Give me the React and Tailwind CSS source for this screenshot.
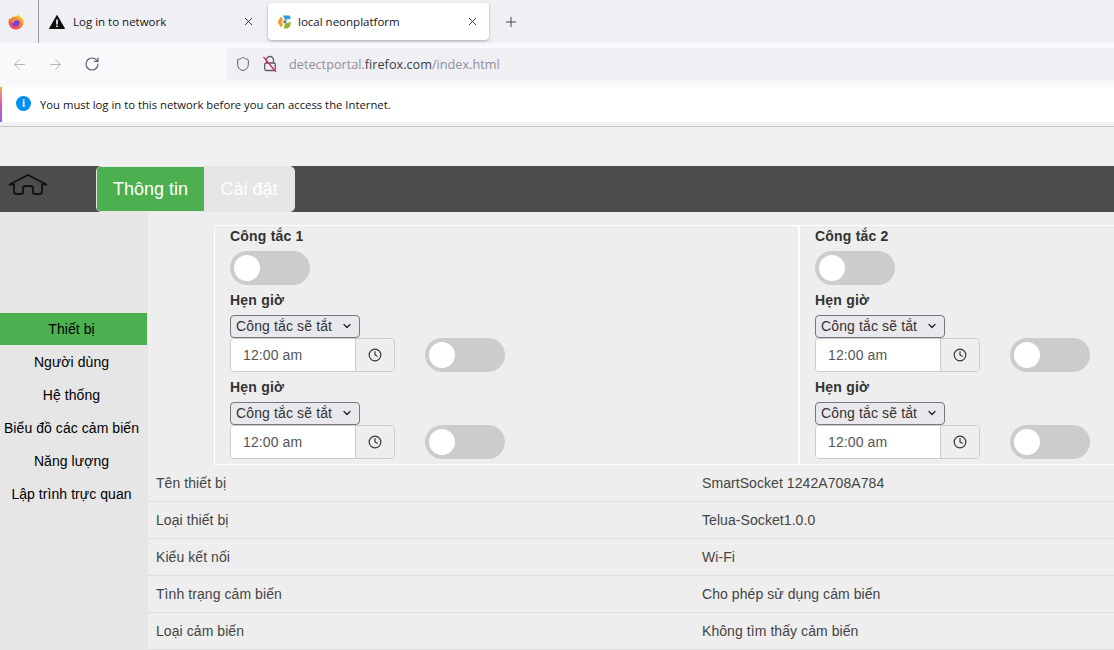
import React from "react";
import { ArrowLeft, ArrowRight, RotateCw, Plus, X, Shield, Clock, ChevronDown } from "lucide-react";

const menuItems = ["Thiết bị", "Người dùng", "Hệ thống", "Biểu đồ các cảm biến", "Năng lượng", "Lập trình trực quan"];

const infoRows = [
  ["Tên thiết bị", "SmartSocket 1242A708A784"],
  ["Loại thiết bị", "Telua-Socket1.0.0"],
  ["Kiểu kết nối", "Wi-Fi"],
  ["Tình trạng cảm biến", "Cho phép sử dụng cảm biến"],
  ["Loại cảm biến", "Không tìm thấy cảm biến"],
];

const FirefoxLogo = () => (
  <svg width="16" height="16" viewBox="0 0 16 16">
    <defs>
      <linearGradient id="ffBody" x1="0.8" y1="0.1" x2="0.2" y2="1">
        <stop offset="0" stopColor="#ffd43a" />
        <stop offset="0.45" stopColor="#ff7a2e" />
        <stop offset="1" stopColor="#f0307a" />
      </linearGradient>
    </defs>
    <path d="M10.500.3c.2 1.200 1 1.800 2 2.500 1.800 1.300 3 3 3 5.200A7.500 7.500 0 0 1 .5 8c0-1.500.4-2.900 1.200-4 0 .8.200 1.300.6 1.600C3 3.800 4.500 2.600 6.500 2.500 8 2.400 9.800 1.800 10.500.3z" fill="url(#ffBody)" />
    <circle cx="7.700" cy="8.500" r="3.900" fill="#7b3fd6" />
    <path d="M3.600 7.500C4.400 5.200 6.500 4.200 8.500 4.500c1.800.3 3 1.500 3.300 3-1-1.200-2.500-1.500-3.800-1.200-1.500.3-2.500 1.300-2.400 3C4.400 9 3.800 8.300 3.600 7.500z" fill="#ff9a2e" />
  </svg>
);

const PortalLogo = () => (
  <svg width="14" height="14" viewBox="0 0 14 14">
    <path d="M4 1.500 .5 7 4 12.500 6 9.500 4.500 7 6 4.500z" fill="#f59a23" />
    <path d="M6 .5h6.500L14 3.500 8 5z" fill="#2f9bd8" />
    <path d="M8 8.500 14 7l-1 4.500-2.500 2H6.500z" fill="#8cb83a" />
    <path d="M5.500 7 7 5.300h2.500V8.300H7z" fill="#7c8288" />
  </svg>
);

const WarningIcon = () => (
  <svg width="16" height="14" viewBox="0 0 16 14">
    <path d="M8 .5 15.500 13.500H.5z" fill="#0c0c0d" stroke="#0c0c0d" strokeLinejoin="round" />
    <rect x="7.200" y="4.500" width="1.600" height="5" fill="#fff" />
    <rect x="7.200" y="10.500" width="1.600" height="1.600" fill="#fff" />
  </svg>
);

const InsecureLock = () => (
  <svg width="16" height="18" viewBox="0 0 16 18" fill="none" className="block">
    <path d="M4.500 8V5a3.500 3.500 0 0 1 7 0v3" stroke="#5b5b66" strokeWidth="1.300" />
    <rect x="2.700" y="8" width="10.600" height="7.500" rx="1.500" stroke="#5b5b66" strokeWidth="1.300" />
    <path d="M1.500 2 14 17" stroke="#e22850" strokeWidth="1.300" />
  </svg>
);

const HomeIcon = () => (
  <svg width="40" height="24" viewBox="0 0 40 24" fill="none" stroke="#111" strokeWidth="1.800" strokeLinejoin="round">
    <path d="M6 11.500H1.500L20 2L38.500 11.500H34V18.500Q34 21 31.500 21H27Q25 21 25 19V15.500Q25 13 22.500 13H17.500Q15 13 15 15.500V19Q15 21 13 21H8.500Q6 21 6 18.500Z" />
  </svg>
);

const Toggle = () => (
  <div className="flex h-[34px] w-[80px] items-center rounded-full bg-[#cccccc] pl-1">
    <div className="h-[26px] w-[26px] rounded-full bg-white" />
  </div>
);

const Timer = () => (
  <div>
    <div className="flex h-[30px] items-center text-sm font-bold tracking-[0.2px] text-[#333333]">Hẹn giờ</div>
    <div className="flex h-[23px] w-[130px] items-center justify-between rounded-[4px] border border-[#767680] bg-[#e9e9ed] pb-[1px] pl-[5px] pr-[6px] text-sm tracking-[0.13px] text-[#333333]">
      <span>Công tắc sẽ tắt</span>
      <ChevronDown size={12} strokeWidth={2.500} className="text-[#222222]" />
    </div>
    <div className="flex items-center">
      <div className="flex h-[34px] w-[165px] overflow-hidden rounded-[4px] border border-[#cccccc]">
        <input
          readOnly
          value="12:00 am"
          className="h-full w-[124px] bg-white pl-[12px] font-['Liberation_Sans',sans-serif] text-sm tracking-[0.1px] text-[#555555] outline-none"
        />
        <div className="flex flex-1 items-center justify-center border-l border-[#cccccc] bg-[#eeeeee]">
          <Clock size={14} strokeWidth={2} className="text-[#333333]" />
        </div>
      </div>
      <div className="ml-[30px]">
        <Toggle />
      </div>
    </div>
  </div>
);

const SwitchPanel = ({ title, className }) => (
  <div className={`h-[240px] border border-white pl-[15px] ${className}`}>
    <div className="h-[25px] text-sm font-bold leading-[20px] tracking-[0.2px] text-[#333333]">{title}</div>
    <Toggle />
    <Timer />
    <Timer />
  </div>
);

export default function App() {
  return (
    <div className="h-[650px] w-[1114px] overflow-hidden bg-[#eeeeee] font-['Liberation_Sans',sans-serif]">
      {/* Browser tabs */}
      <div className="flex h-[43px] bg-[#f0f0f4] font-['Open_Sans',sans-serif] text-[11.5px] text-[#15141a]">
        <div className="flex w-[39px] items-center border-r border-[#9a9a9a] pl-[8px]">
          <FirefoxLogo />
        </div>
        <div className="flex w-[220px] items-center pl-[10px] pr-[3px]">
          <WarningIcon />
          <span className="ml-[8px] flex-1">Log in to network</span>
          <X size={13} strokeWidth={1.500} className="mr-[1px]" />
        </div>
        <div className="mt-[3px] ml-[9px] flex h-[37px] w-[221px] items-center rounded-[4px] bg-white pl-[9px] pr-[10px] shadow-[0_1px_3px_rgba(0,0,0,0.3)]">
          <PortalLogo />
          <span className="ml-[7px] flex-1">local neonplatform</span>
          <X size={13} strokeWidth={1.500} />
        </div>
        <div className="flex w-[43px] items-center justify-center">
          <Plus size={16} strokeWidth={1.500} className="text-[#444444]" />
        </div>
      </div>

      {/* Browser toolbar */}
      <div className="flex h-[44px] items-center bg-[#f9f9fb] pb-[2px] pl-[11px]">
        <ArrowLeft size={17} strokeWidth={1.400} className="text-[#b5b5b9]" />
        <ArrowRight size={17} strokeWidth={1.400} className="ml-[19px] text-[#b5b5b9]" />
        <RotateCw size={16} strokeWidth={1.700} className="ml-[20px] text-[#5b5b66]" />
        <div className="ml-[127px] flex h-[32px] flex-1 items-center rounded-l-[4px] bg-[#f0f0f4] pl-[8px] font-['Open_Sans',sans-serif] text-[12.7px]">
          <Shield size={16} strokeWidth={1.500} className="text-[#5b5b66]" />
          <span className="ml-[11px]">
            <InsecureLock />
          </span>
          <span className="ml-[11px] mt-[1px] text-[#8f8f9d]">
            detectportal.<span className="text-[#3a3a44]">firefox.com</span>/index.html
          </span>
        </div>
      </div>

      {/* Notification bar */}
      <div className="flex h-[35px] bg-white font-['Open_Sans',sans-serif] text-[11.3px] text-[#15141a]">
        <div className="h-full w-[2px] bg-gradient-to-b from-[#ffa436] via-[#e64fb0] to-[#9059ff]" />
        <div className="flex items-center pl-[14px]">
          <div className="-mt-[2px] flex h-[15px] w-[15px] items-center justify-center rounded-full bg-[#0090ed] text-[10px] font-bold text-white">i</div>
          <span className="ml-[9px] mt-[1px]">You must log in to this network before you can access the Internet.</span>
        </div>
      </div>

      <div className="h-[4px] bg-[#f0f0f0]" />
      <div className="h-[40px] border-t border-[#c8c8c8] bg-[#f0f0f0]" />

      {/* Page header */}
      <div className="flex h-[46px] bg-[#4d4d4d]">
        <div className="ml-[8px] mt-[7px]">
          <HomeIcon />
        </div>
        <div className="ml-[48px] flex h-[46px] w-[199px] overflow-hidden rounded-[5px] border border-[#e6e6e6] text-[18px] text-white">
          <div className="flex w-[107px] items-center justify-center bg-[#4caf50]">Thông tin</div>
          <div className="flex flex-1 items-center justify-center bg-[#e6e6e6]">Cài đặt</div>
        </div>
      </div>

      <div className="flex">
        {/* Sidebar */}
        <div className="h-[438px] w-[148px] bg-[#e6e6e6] pt-[101px] text-sm tracking-[0.06px] text-black">
          {menuItems.map((item, i) => (
            <div
              key={item}
              className={`flex w-[147px] items-center justify-center pr-[4px] ${i === 0 ? "h-[32px] bg-[#4caf50]" : "h-[33px]"}`}
            >
              {item}
            </div>
          ))}
        </div>

        <div className="flex-1">
          <div className="flex pl-[66px] pt-[13px]">
            <SwitchPanel title="Công tắc 1" className="w-[585px]" />
            <SwitchPanel title="Công tắc 2" className="flex-1 border-r-0" />
          </div>
          {infoRows.map(([label, value]) => (
            <div key={label} className="flex h-[37px] items-center border-b border-[#dddddd] pl-[8px] text-sm tracking-[0.07px] text-[#444444]">
              <div className="w-[546px]">{label}</div>
              <div>{value}</div>
            </div>
          ))}
        </div>
      </div>
    </div>
  );
}
